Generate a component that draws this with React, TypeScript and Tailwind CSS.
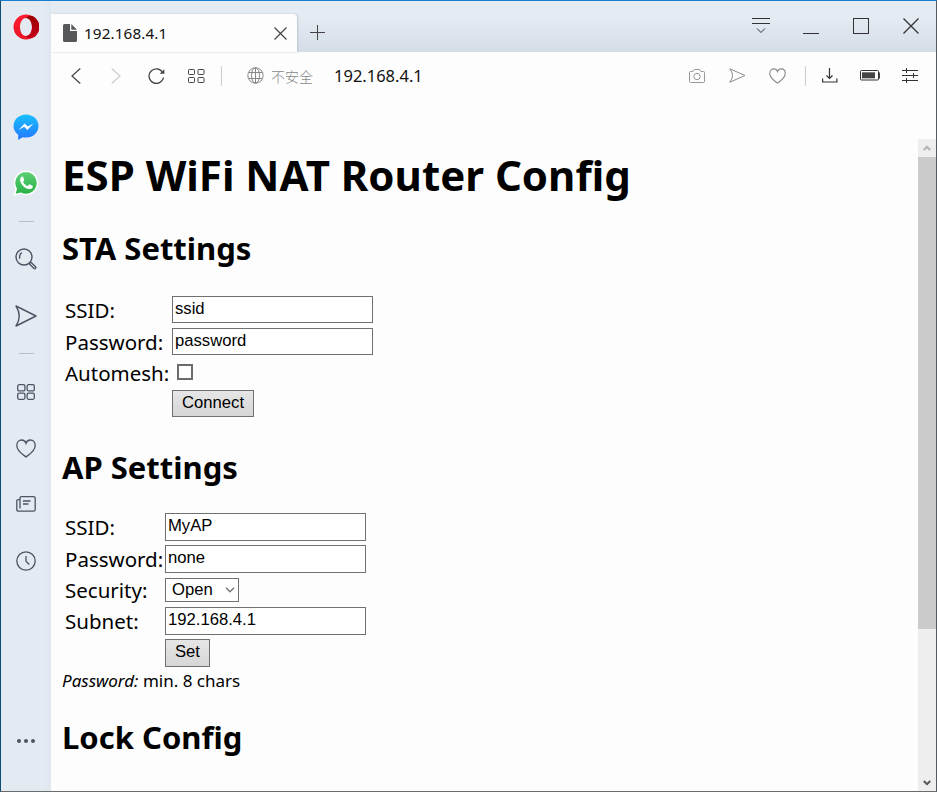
import type { ReactNode } from "react";

type IconProps = { w: number; h: number; color?: string; sw?: number; children: ReactNode };

function Icon({ w, h, color = "#444", sw = 1, children }: IconProps) {
  return (
    <svg width={w} height={h} viewBox={`0 0 ${w} ${h}`} fill="none" stroke={color} strokeWidth={sw} className="shrink-0">
      {children}
    </svg>
  );
}

const SIDE = "#4b5563";
const HEART = "M10 18 C7 15.5 .8 12 .8 6.4 C.8 3 3 1 5.6 1 C8 1 9.4 2.4 10 4.2 C10.6 2.4 12 1 14.4 1 C17 1 19.2 3 19.2 6.4 C19.2 12 13 15.5 10 18 Z";

function Slot({ className, children }: { className: string; children: ReactNode }) {
  return <div className={`flex shrink-0 items-center justify-center ${className}`}>{children}</div>;
}

function Sidebar() {
  return (
    <aside className="flex w-[50px] shrink-0 flex-col bg-[#e3eaf2] shadow-[inset_-6px_0_6px_-5px_#dbe5ee]">
      <Slot className="h-[52px]">
        <svg width="26" height="26" viewBox="0 0 26 26">
          <defs>
            <linearGradient id="op" x1="0" x2="0" y1="0" y2="1">
              <stop offset="0" stopColor="#ff1b2d" />
              <stop offset="1" stopColor="#e81428" />
            </linearGradient>
            <linearGradient id="opd" x1="0" x2="0" y1="0" y2="1">
              <stop offset="0" stopColor="#9c0000" />
              <stop offset="1" stopColor="#c4001a" />
            </linearGradient>
          </defs>
          <path fillRule="evenodd" fill="url(#op)" d="M13 .5a12.5 12.5 0 1 0 0 25 12.5 12.5 0 0 0 0-25ZM13 4c3.600 0 6 4 6 9s-2.400 9-6 9-6-4-6-9 2.400-9 6-9Z" />
          <path fill="url(#opd)" d="M13 4c2-2.400 5-2.600 7.600-1.600a12.500 12.500 0 0 1 0 21.200C18 24.600 15 24.400 13 22c3.600 0 6-4 6-9s-2.400-9-6-9Z" />
        </svg>
      </Slot>
      <div className="h-[46px] shrink-0" />
      <Slot className="h-14">
        <svg width="26" height="26" viewBox="0 0 26 26">
          <defs>
            <linearGradient id="ms" x1="0" x2="0" y1="0" y2="1">
              <stop offset="0" stopColor="#19bfff" />
              <stop offset="1" stopColor="#2477ff" />
            </linearGradient>
          </defs>
          <path fill="url(#ms)" d="M13 .5C6 .5.5 5.600.5 12c0 3.500 1.700 6.500 4.700 8.700V26l4.400-2.800c1.100.2 2.200.4 3.400.4 7 0 12.500-5.100 12.500-11.600S20 .5 13 .5Z" />
          <path fill="#fff" d="M5.500 16 11.600 9.400l3.300 3L20.500 9.400 14.400 16l-3.200-3.200Z" />
        </svg>
      </Slot>
      <Slot className="h-14">
        <svg width="26" height="26" viewBox="0 0 26 26">
          <defs>
            <linearGradient id="wa" x1="0" x2="0" y1="0" y2="1">
              <stop offset="0" stopColor="#5fd178" />
              <stop offset="1" stopColor="#27b043" />
            </linearGradient>
          </defs>
          <path fill="url(#wa)" stroke="#fff" strokeWidth="1.500" d="M13.200 1.200A11.600 11.600 0 0 0 3.300 18.800L1.500 24.800l6.200-1.600A11.600 11.600 0 1 0 13.200 1.200Z" />
          <path fill="#fff" d="M9.300 6.600c-.6 0-2.300 1.200-2.200 3.300.2 4 5 8.800 8.900 9.200 2 .2 3.600-1.200 3.800-2.200.1-.8 0-1-.4-1.200l-2.500-1.300c-.5-.2-.8-.1-1.100.3l-1 1.200c-.4.300-3.900-1.600-4.700-4 0-.5 1.300-1.100 1.100-1.800L10.200 7.100c-.2-.4-.5-.5-.9-.5Z" />
        </svg>
      </Slot>
      <Slot className="h-5"><div className="h-px w-[15px] bg-[#b3bfcc]" /></Slot>
      <Slot className="h-14">
        <Icon w={22} h={22} color={SIDE} sw={1.4}>
          <circle cx="9" cy="9" r="8" />
          <path d="M6.800 4.700Q4.300 6 4.600 10.700" />
          <path d="m14.800 14.800-.6 1 4.600 4.500a1.100 1.100 0 0 0 1.700-1.600L16 14.200Z" strokeLinejoin="round" />
        </Icon>
      </Slot>
      <Slot className="h-[57px]">
        <Icon w={22} h={22} color={SIDE} sw={1.4}>
          <path d="M1 1 21 11 1 21Q7.500 11 1 1Z" strokeLinejoin="round" />
        </Icon>
      </Slot>
      <Slot className="h-[19px]"><div className="h-px w-[15px] bg-[#b3bfcc]" /></Slot>
      <Slot className="h-[57px]">
        <Icon w={18} h={16} color={SIDE} sw={1.300}>
          <rect x=".7" y=".7" width="7.200" height="6.200" rx="1.500" />
          <rect x="10.100" y=".7" width="7.200" height="6.200" rx="1.500" />
          <rect x=".7" y="9.100" width="7.200" height="6.200" rx="1.500" />
          <rect x="10.100" y="9.100" width="7.200" height="6.200" rx="1.500" />
        </Icon>
      </Slot>
      <Slot className="h-14">
        <Icon w={20} h={19} color={SIDE} sw={1.300}><path d={HEART} /></Icon>
      </Slot>
      <Slot className="h-14">
        <Icon w={20} h={16} color={SIDE} sw={1.300}>
          <path d="M4 12.500V2.200Q4 .7 5.500.7h12Q19.200.7 19.200 2.300v11.200q0 1.700-1.700 1.700h-15Q.8 15.200.8 13.500V5Q.8 3.600 2.200 3.600H4M7 5h7.500M7 8h5.500" />
        </Icon>
      </Slot>
      <Slot className="h-[57px]">
        <Icon w={20} h={20} color={SIDE} sw={1.300}>
          <circle cx="10" cy="10" r="9.200" />
          <path d="M10 5v5.300l3.300 3.200" />
        </Icon>
      </Slot>
      <Slot className="mt-auto mb-[22px] h-14">
        <div className="flex gap-[3px]">
          <i className="size-1 rounded-full bg-[#4b5563]" />
          <i className="size-1 rounded-full bg-[#4b5563]" />
          <i className="size-1 rounded-full bg-[#4b5563]" />
        </div>
      </Slot>
    </aside>
  );
}

function TabBar() {
  return (
    <div className="flex h-[51px] shrink-0 items-start bg-linear-to-b from-[#e4ebf3] from-30% to-[#d5dde6]">
      <div className="mt-[13px] flex h-[38px] w-[246px] items-center rounded-tr-sm bg-[#fdfdfd] pl-3 shadow-[1px_0_2px_#bcc6d0]">
        <svg width="14" height="18" viewBox="0 0 14 18" className="shrink-0" fill="#57585a">
          <path d="M1.500 0H7v7h7v9.500q0 1.500-1.500 1.500h-11Q0 18 0 16.500v-15Q0 0 1.500 0ZM8.300 0 14 5.800H8.300Z" />
        </svg>
        <span className="ml-[7px] w-[190px] text-[15.3px] leading-5 tracking-[0.1px] text-[#111]">192.168.4.1</span>
        <Icon w={13} h={13} color="#444"><path d="m.5.500 12 12m0-12-12 12" strokeWidth="1.200" /></Icon>
      </div>
      <div className="mt-6 ml-[13px] flex">
        <Icon w={15} h={15}><path d="M7.500 0v15M0 7.500h15" /></Icon>
      </div>
      <div className="ml-auto flex h-[50px] items-center pr-[17px]">
        <Icon w={18} h={16} color="#333"><path d="M0 .5h18M0 5.500h18M5 10.500l4 4 4-4" /></Icon>
        <div className="mt-[15px] ml-[33px] h-px w-4 bg-[#333]" />
        <div className="ml-[34px] size-4 border border-[#333]" />
        <span className="ml-[34px]"><Icon w={16} h={16} color="#333" sw={1.300}><path d="m.5.500 15 15m0-15-15 15" /></Icon></span>
      </div>
    </div>
  );
}

function Toolbar() {
  return (
    <div className="flex h-[47px] shrink-0 items-center pr-[18px] pl-5">
      <Icon w={10} h={16} sw={1.200}><path d="M9.300.5 1 8l8.300 7.500" /></Icon>
      <span className="ml-[30px]"><Icon w={10} h={16} color="#ccc" sw={1.200}><path d="M.7.500 9 8 .7 15.500" /></Icon></span>
      <span className="ml-[27px]">
        <Icon w={17} h={16} color="#444" sw={1.300}>
          <path d="M14.500 4.200A7.300 7.300 0 1 0 15.500 9.500" />
          <path d="M16.300 1.200v4.600h-4.600Z" fill="#444" stroke="none" />
        </Icon>
      </span>
      <span className="ml-[23px]">
        <Icon w={17} h={14}>
          <rect x=".5" y=".5" width="6" height="5" rx=".8" />
          <rect x="10" y=".5" width="6" height="5" rx=".8" />
          <rect x=".5" y="8.500" width="6" height="5" rx=".8" />
          <rect x="10" y="8.500" width="6" height="5" rx=".8" />
        </Icon>
      </span>
      <div className="ml-4 h-5 w-px bg-[#ccc]" />
      <span className="ml-[25px]">
        <Icon w={17} h={17} color="#888">
          <circle cx="8.500" cy="8.500" r="7.700" />
          <ellipse cx="8.500" cy="8.500" rx="4" ry="7.700" />
          <path d="M8.500 1v15M1.500 5.500h14M1.500 11.500h14" />
        </Icon>
      </span>
      <span className="ml-[7px] w-[63px] font-['Noto_Sans_CJK_SC',sans-serif] text-[14px] leading-5 font-light text-[#888]">不安全</span>
      <span className="text-[16.5px] leading-6 text-[#111]">192.168.4.1</span>
      <div className="ml-auto flex items-center">
        <Icon w={16} h={14} color="#999">
          <path d="M.5 3.500q0-1 1-1H4L5.300.5h5.400L12 2.500h2.500q1 0 1 1v9q0 1-1 1h-13q-1 0-1-1Z" />
          <circle cx="8" cy="7.500" r="3.200" />
        </Icon>
        <span className="ml-6"><Icon w={17} h={15} color="#8a8a8a"><path d="M.8.800 16 7.500.8 14.200Q6.200 7.500.8.800Z" /></Icon></span>
        <span className="ml-[23px]">
          <svg width="17" height="16" viewBox="0 0 20 19" fill="none" stroke="#8a8a8a" strokeWidth="1.300"><path d={HEART} /></svg>
        </span>
        <div className="ml-[19px] h-5 w-px bg-[#ccc]" />
        <span className="ml-4"><Icon w={16} h={15} color="#333" sw={1.200}><path d="M7.500 0v10.500M4.500 7.500l3 3 3-3M.6 10.500v3.500h14.300v-3.500" /></Icon></span>
        <span className="ml-[22px]">
          <Icon w={20} h={11} color="#333">
            <rect x=".5" y=".5" width="18" height="9.500" rx="1" />
            <path d="M2 2.300h13v6H2Z" fill="#444" stroke="none" />
            <path d="M19.300 2.500v6" strokeWidth="1.200" />
          </Icon>
        </span>
        <span className="ml-[22px]"><Icon w={16} h={15} color="#333"><path d="M0 2.500h16M0 7.500h16M0 12.500h16M4.500 0v5M11.500 5v5M4.500 10v5" /></Icon></span>
      </div>
    </div>
  );
}

const FIELD = "w-[201px] border border-[#707070] bg-white pl-[2px] font-['Liberation_Sans',Arial,sans-serif] text-[16.67px] text-black";
const BUTTON = "border border-[#707070] bg-linear-to-b from-[#e6e6e6] to-[#d6d6d6] text-center font-['Liberation_Sans',Arial,sans-serif] text-[16.67px] text-black";

function Row({ label, labelWidth, height, children }: { label?: string; labelWidth: string; height: string; children: ReactNode }) {
  return (
    <div className={`flex items-center ${height}`}>
      <span className={`${labelWidth} shrink-0 pl-[3px] text-[20.5px] whitespace-nowrap`}>{label}</span>
      {children}
    </div>
  );
}

function Page() {
  return (
    <main className="flex h-[692px] flex-1 justify-between overflow-hidden text-black">
      <div className="flex flex-col pt-[48px] pl-[11px]">
        <h1 className="h-[81px] text-[42px] leading-[56px] font-bold whitespace-nowrap">ESP WiFi NAT Router Config</h1>
        <h2 className="mb-[26px] text-[31px] leading-10 font-bold">STA Settings</h2>
        <div>
          <Row label="SSID:" labelWidth="w-[110px]" height="h-8"><div className={`${FIELD} mb-px h-[27px] leading-[23px]`}>ssid</div></Row>
          <Row label="Password:" labelWidth="w-[110px]" height="h-8"><div className={`${FIELD} mb-px h-[27px] leading-[23px]`}>password</div></Row>
          <Row label="Automesh:" labelWidth="w-[110px]" height="h-[30px]"><div className="ml-[5px] mb-[2px] size-4 border-2 border-[#6b6b6b] bg-white" /></Row>
          <Row labelWidth="w-[110px]" height="h-[31px]"><div className={`${BUTTON} h-[27px] w-[82px] leading-[23px]`}>Connect</div></Row>
        </div>
        <h2 className="mt-7 mb-6 text-[31px] leading-10 font-bold">AP Settings</h2>
        <div>
          <Row label="SSID:" labelWidth="w-[103px]" height="h-8"><div className={`${FIELD} h-7 leading-6`}>MyAP</div></Row>
          <Row label="Password:" labelWidth="w-[103px]" height="h-8"><div className={`${FIELD} h-7 leading-6`}>none</div></Row>
          <Row label="Security:" labelWidth="w-[103px]" height="h-[30px]">
            <div className="flex h-6 w-[74px] items-center justify-between border border-[#707070] bg-white pr-[3px] pl-[6px] font-['Liberation_Sans',Arial,sans-serif] text-[16.67px] leading-[22px]">
              <span>Open</span>
              <Icon w={10} h={6} color="#777" sw={1.400}><path d="m1 .8 4 4 4-4" /></Icon>
            </div>
          </Row>
          <Row label="Subnet:" labelWidth="w-[103px]" height="h-8"><div className={`${FIELD} h-7 leading-6`}>192.168.4.1</div></Row>
          <Row labelWidth="w-[103px]" height="h-8"><div className={`${BUTTON} h-7 w-[45px] leading-6`}>Set</div></Row>
        </div>
        <p className="text-[17px] leading-6"><em>Password:</em> min. 8 chars</p>
        <h2 className="mt-6 text-[31px] leading-10 font-bold">Lock Config</h2>
      </div>
      <div className="mt-10 flex h-[652px] w-[18px] flex-col items-center bg-[#eee]">
        <div className="flex h-[18px] shrink-0 items-center justify-center"><Icon w={8} h={6} color="#b0b0b0" sw={2}><path d="M.8 5 4 1.800 7.200 5" /></Icon></div>
        <div className="h-[472px] w-full shrink-0 bg-[#cbcbcb]" />
        <div className="mt-auto mb-[5px]"><Icon w={8} h={6} color="#555" sw={2}><path d="M.8 1 4 4.200 7.200 1" /></Icon></div>
      </div>
    </main>
  );
}

export default function App() {
  return (
    <div className="flex h-[792px] w-[937px] overflow-hidden border border-t-[#1b7fd0] border-r-[#555a60] border-b-[#6b6b6b] border-l-[#0e4f72] bg-[#fdfdfd] font-['Noto_Sans',sans-serif]">
      <Sidebar />
      <div className="flex min-w-0 flex-1 flex-col">
        <TabBar />
        <Toolbar />
        <Page />
      </div>
    </div>
  );
}
